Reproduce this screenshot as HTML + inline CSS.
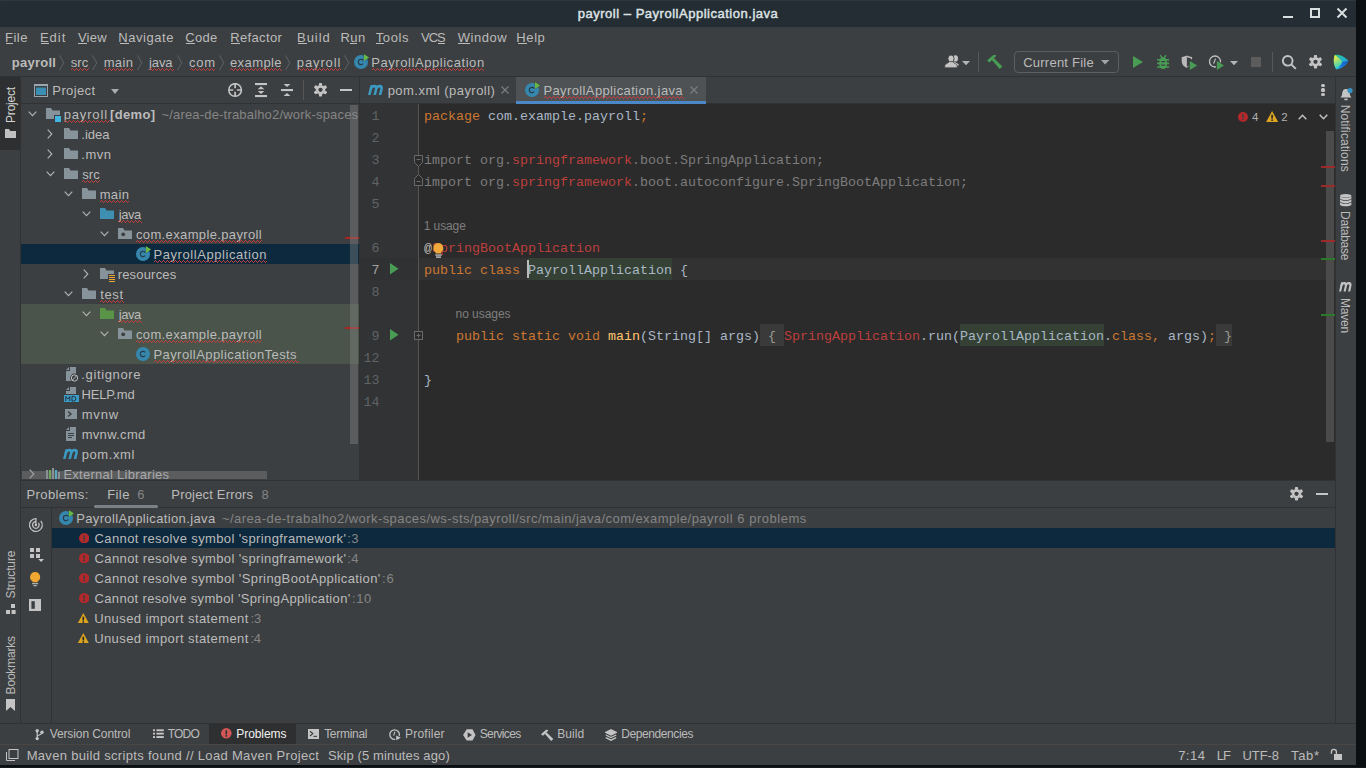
<!DOCTYPE html>
<html><head><meta charset="utf-8"><title>payroll – PayrollApplication.java</title><style>
html,body{margin:0;padding:0;background:#0b0f11;width:1366px;height:768px;overflow:hidden}
body{font-family:"Liberation Sans",sans-serif;font-size:13px;color:#bbbbbb;position:relative}
.t{position:absolute;white-space:pre;line-height:16px;height:16px}
.r{position:absolute}
.i{position:absolute;display:block}
.m{font-family:"Liberation Mono",monospace;font-size:13.33px}
</style></head><body>
<svg width="0" height="0" style="position:absolute"><defs><pattern id="wv" width="4" height="3" patternUnits="userSpaceOnUse"><rect x="0" y="1" width="1" height="1" fill="#c0403c"/><rect x="1" y="0" width="1" height="1" fill="#c0403c"/><rect x="2" y="1" width="1" height="1" fill="#c0403c"/><rect x="3" y="2" width="1" height="1" fill="#c0403c"/></pattern></defs></svg>
<div class="r" style="left:0px;top:0px;width:1356px;height:765px;background:#3c3f41;"></div>
<div class="r" style="left:0px;top:0px;width:1356px;height:27px;background:#232d33;border-radius:3px 3px 0 0;"></div>
<div class="r" style="left:2px;top:0px;width:1352px;height:1px;background:#2d393e;"></div>
<span class="t" style="left:577.76px;top:6.00px;font-size:13px;line-height:15px;height:15px;color:#dfe3e5;letter-spacing:0.515px;-webkit-text-stroke:0.45px #dfe3e5;">payroll – PayrollApplication.java</span>
<div class="r" style="left:1283px;top:16px;width:10px;height:2px;background:#d9dee0;"></div>
<div class="r" style="left:1310px;top:8px;width:6px;height:6px;border:2px solid #d9dee0"></div>
<svg class="i" style="left:1336px;top:7px;" width="12" height="12" viewBox="0 0 12 12"><path d="M1.5 1.5 L10.5 10.5 M10.5 1.5 L1.5 10.5" stroke="#d9dee0" stroke-width="2" fill="none"/></svg>
<span class="t" style="left:5.03px;top:30.00px;font-size:13px;line-height:15px;height:15px;color:#bbbbbb;letter-spacing:0.466px;">File</span>
<span class="t" style="left:39.93px;top:30.00px;font-size:13px;line-height:15px;height:15px;color:#bbbbbb;letter-spacing:0.987px;">Edit</span>
<span class="t" style="left:77.94px;top:30.00px;font-size:13px;line-height:15px;height:15px;color:#bbbbbb;letter-spacing:0.216px;">View</span>
<span class="t" style="left:118.23px;top:30.00px;font-size:13px;line-height:15px;height:15px;color:#bbbbbb;letter-spacing:0.548px;">Navigate</span>
<span class="t" style="left:185.34px;top:30.00px;font-size:13px;line-height:15px;height:15px;color:#bbbbbb;letter-spacing:0.253px;">Code</span>
<span class="t" style="left:230.13px;top:30.00px;font-size:13px;line-height:15px;height:15px;color:#bbbbbb;letter-spacing:0.379px;">Refactor</span>
<span class="t" style="left:297.03px;top:30.00px;font-size:13px;line-height:15px;height:15px;color:#bbbbbb;letter-spacing:0.974px;">Build</span>
<span class="t" style="left:340.43px;top:30.00px;font-size:13px;line-height:15px;height:15px;color:#bbbbbb;letter-spacing:0.481px;">Run</span>
<span class="t" style="left:375.71px;top:30.00px;font-size:13px;line-height:15px;height:15px;color:#bbbbbb;letter-spacing:0.643px;">Tools</span>
<span class="t" style="left:421.04px;top:30.00px;font-size:13px;line-height:15px;height:15px;color:#bbbbbb;letter-spacing:-0.988px;">VCS</span>
<span class="t" style="left:457.64px;top:30.00px;font-size:13px;line-height:15px;height:15px;color:#bbbbbb;letter-spacing:0.558px;">Window</span>
<span class="t" style="left:516.33px;top:30.00px;font-size:13px;line-height:15px;height:15px;color:#bbbbbb;letter-spacing:0.592px;">Help</span>
<div class="r" style="left:6px;top:43px;width:7px;height:1px;background:#bbbbbb;"></div>
<div class="r" style="left:41px;top:43px;width:8px;height:1px;background:#bbbbbb;"></div>
<div class="r" style="left:78px;top:43px;width:9px;height:1px;background:#bbbbbb;"></div>
<div class="r" style="left:119.5px;top:43px;width:9.0px;height:1px;background:#bbbbbb;"></div>
<div class="r" style="left:186px;top:43px;width:8.5px;height:1px;background:#bbbbbb;"></div>
<div class="r" style="left:231px;top:43px;width:8.5px;height:1px;background:#bbbbbb;"></div>
<div class="r" style="left:298px;top:43px;width:8.5px;height:1px;background:#bbbbbb;"></div>
<div class="r" style="left:350px;top:43px;width:7px;height:1px;background:#bbbbbb;"></div>
<div class="r" style="left:376px;top:43px;width:8px;height:1px;background:#bbbbbb;"></div>
<div class="r" style="left:438px;top:43px;width:7px;height:1px;background:#bbbbbb;"></div>
<div class="r" style="left:457.5px;top:43px;width:12.5px;height:1px;background:#bbbbbb;"></div>
<div class="r" style="left:517.5px;top:43px;width:9.0px;height:1px;background:#bbbbbb;"></div>
<span class="t" style="left:11.84px;top:55.00px;font-size:13px;line-height:15px;height:15px;color:#bbbbbb;font-weight:bold;letter-spacing:0.242px;">payroll</span>
<span class="t" style="left:70.64px;top:55.00px;font-size:13px;line-height:15px;height:15px;color:#bbbbbb;letter-spacing:0.188px;">src</span>
<svg class="i" style="left:71px;top:68px" width="18" height="3" shape-rendering="crispEdges"><rect width="18" height="3" fill="url(#wv)"/></svg>
<span class="t" style="left:103.64px;top:55.00px;font-size:13px;line-height:15px;height:15px;color:#bbbbbb;letter-spacing:0.410px;">main</span>
<svg class="i" style="left:104px;top:68px" width="29" height="3" shape-rendering="crispEdges"><rect width="29" height="3" fill="url(#wv)"/></svg>
<span class="t" style="left:148.92px;top:55.00px;font-size:13px;line-height:15px;height:15px;color:#bbbbbb;letter-spacing:-0.055px;">java</span>
<svg class="i" style="left:149px;top:68px" width="25" height="3" shape-rendering="crispEdges"><rect width="25" height="3" fill="url(#wv)"/></svg>
<span class="t" style="left:189.05px;top:55.00px;font-size:13px;line-height:15px;height:15px;color:#bbbbbb;letter-spacing:0.725px;">com</span>
<svg class="i" style="left:190px;top:68px" width="25" height="3" shape-rendering="crispEdges"><rect width="25" height="3" fill="url(#wv)"/></svg>
<span class="t" style="left:229.95px;top:55.00px;font-size:13px;line-height:15px;height:15px;color:#bbbbbb;letter-spacing:0.415px;">example</span>
<svg class="i" style="left:230px;top:68px" width="52" height="3" shape-rendering="crispEdges"><rect width="52" height="3" fill="url(#wv)"/></svg>
<span class="t" style="left:296.86px;top:55.00px;font-size:13px;line-height:15px;height:15px;color:#bbbbbb;letter-spacing:0.869px;">payroll</span>
<svg class="i" style="left:298px;top:68px" width="43" height="3" shape-rendering="crispEdges"><rect width="43" height="3" fill="url(#wv)"/></svg>
<span class="t" style="left:371.23px;top:55.00px;font-size:13px;line-height:15px;height:15px;color:#bbbbbb;letter-spacing:0.563px;">PayrollApplication</span>
<svg class="i" style="left:372px;top:68px" width="112" height="3" shape-rendering="crispEdges"><rect width="112" height="3" fill="url(#wv)"/></svg>
<svg class="i" style="left:59.3px;top:54.5px;" width="6" height="16" viewBox="0 0 6 16"><path d="M0.5 0.5 L4.8 7.8 L0.5 15.1" stroke="#606465" stroke-width="1" fill="none"/></svg>
<svg class="i" style="left:92.2px;top:54.5px;" width="6" height="16" viewBox="0 0 6 16"><path d="M0.5 0.5 L4.8 7.8 L0.5 15.1" stroke="#606465" stroke-width="1" fill="none"/></svg>
<svg class="i" style="left:137px;top:54.5px;" width="6" height="16" viewBox="0 0 6 16"><path d="M0.5 0.5 L4.8 7.8 L0.5 15.1" stroke="#606465" stroke-width="1" fill="none"/></svg>
<svg class="i" style="left:177.3px;top:54.5px;" width="6" height="16" viewBox="0 0 6 16"><path d="M0.5 0.5 L4.8 7.8 L0.5 15.1" stroke="#606465" stroke-width="1" fill="none"/></svg>
<svg class="i" style="left:219px;top:54.5px;" width="6" height="16" viewBox="0 0 6 16"><path d="M0.5 0.5 L4.8 7.8 L0.5 15.1" stroke="#606465" stroke-width="1" fill="none"/></svg>
<svg class="i" style="left:285.3px;top:54.5px;" width="6" height="16" viewBox="0 0 6 16"><path d="M0.5 0.5 L4.8 7.8 L0.5 15.1" stroke="#606465" stroke-width="1" fill="none"/></svg>
<svg class="i" style="left:343.8px;top:54.5px;" width="6" height="16" viewBox="0 0 6 16"><path d="M0.5 0.5 L4.8 7.8 L0.5 15.1" stroke="#606465" stroke-width="1" fill="none"/></svg>
<svg class="i" style="left:354px;top:54px;overflow:visible;" width="16" height="16" viewBox="0 -1 16 16"><circle cx="7" cy="7" r="7" fill="#3587ae"/><path d="M9.1 5.3 A2.7 2.7 0 1 0 9.1 8.7" stroke="#2a3a46" stroke-width="1.15" fill="none"/><path d="M9.9 -1 L15.1 2.5 L9.9 5.9 Z" fill="#68b843" stroke="rgba(20,35,50,0.55)" stroke-width="0.7" paint-order="stroke"/></svg>
<div class="r" style="left:0px;top:76px;width:1356px;height:1px;background:#323232;"></div>
<svg class="i" style="left:944px;top:55px;" width="16" height="13" viewBox="0 0 16 13"><g fill="#c4c4c4"><ellipse cx="11.4" cy="3.4" rx="2.6" ry="3.2"/><path d="M9 6.5 C12 7.6 15 8.6 15 10.4 H11 Z"/><ellipse cx="7" cy="3.6" rx="3.1" ry="3.6" stroke="#3c3f41" stroke-width="0.9"/><path d="M0.8 12.8 V10.6 C0.8 8.8 4.4 8.4 5.4 6.6 H8.6 C9.6 8.4 13.2 8.8 13.2 10.6 V12.8 Z" stroke="#3c3f41" stroke-width="0.7"/></g></svg>
<svg class="i" style="left:962px;top:61px;" width="8" height="4.3" viewBox="0 0 8 4.3"><path d="M0 0 H8 L4.0 4.3 Z" fill="#b4b4b4"/></svg>
<div class="r" style="left:978px;top:52px;width:1px;height:20px;background:#585858;"></div>
<svg class="i" style="left:987px;top:54px;" width="16" height="16" viewBox="0 0 16 16"><g fill="#499c54"><path d="M0 6.5 L6.3 0.9 L9.2 1.1 L8.6 2.5 L2.5 8.4 Z"/><path d="M4.7 5.8 L6.8 4.1 L15.4 12.4 L12.7 15.1 Z"/></g></svg>
<div class="r" style="left:1014px;top:51px;width:103px;height:20px;border:1px solid #5c5f60;border-radius:4px"></div>
<span class="t" style="left:1023.24px;top:55.00px;font-size:13px;line-height:15px;height:15px;color:#bbbbbb;letter-spacing:0.230px;">Current File</span>
<svg class="i" style="left:1100.8px;top:60px;" width="8.2" height="4.6" viewBox="0 0 8.2 4.6"><path d="M0 0 H8.2 L4.1 4.6 Z" fill="#a2a5a7"/></svg>
<svg class="i" style="left:1133px;top:56px;" width="10.0" height="12.0" viewBox="0 0 10 12"><path d="M0 0 L10 6 L0 12 Z" fill="#499c54"/></svg>
<svg class="i" style="left:1156px;top:55px;overflow:visible;" width="14" height="14" viewBox="0 0 14 14"><g fill="#499c54" stroke="#499c54"><path d="M7.1 2.3 C10 2.3 10.9 4.8 10.9 8.4 C10.9 12 9.4 14 7.1 14 C4.8 14 3.3 12 3.3 8.4 C3.3 4.8 4.2 2.3 7.1 2.3 Z" stroke="none"/><path d="M4.2 0.2 L6.2 3 M10 0.2 L8 3" stroke-width="1.3" fill="none"/><path d="M1.1 4.8 H13.1 M1.1 8.4 H13.1 M1.1 12 H13.1" stroke-width="1.6" fill="none"/></g><path d="M5.3 6.6 H8.9 M5.3 10.2 H8.9" stroke="#3c3f41" stroke-width="1.2"/></svg>
<svg class="i" style="left:1181px;top:55px;overflow:visible;" width="18" height="17" viewBox="0 0 18 17"><path d="M5.9 0.5 C4.6 1.2 3 1.6 0.7 2 V6 C0.7 9.6 3.2 11.8 5.9 12.9 Z" fill="#b9b9b9"/><path d="M5.9 0.5 C7.2 1.2 8.8 1.6 11.1 2 V4.2 H9.8 V3.2 C8.4 3 7 2.6 5.9 2.2 Z" fill="#b9b9b9"/><path d="M5.9 12.9 C6.6 12.6 7.3 12.2 7.9 11.8 L7.9 10.4 C7.3 10.8 6.6 11.1 5.9 11.4 Z" fill="#8a8a8a"/><path d="M7.8 4.6 L17.4 10.5 L7.8 16.4 Z" fill="#3c3f41"/><path d="M8.8 6.1 L16.2 10.5 L8.8 14.9 Z" fill="#499c54"/></svg>
<svg class="i" style="left:1208px;top:55px;overflow:visible;" width="18" height="17" viewBox="0 0 18 17"><circle cx="7" cy="6.5" r="5.5" fill="none" stroke="#c4c4c4" stroke-width="1.3"/><path d="M7.6 3.6 L5.6 8.6" fill="none" stroke="#c4c4c4" stroke-width="1.2"/><path d="M7.9 4.6 L17.4 10.5 L7.9 16.4 Z" fill="#3c3f41"/><path d="M8.9 6.1 L16 10.5 L8.9 14.9 Z" fill="#499c54"/></svg>
<svg class="i" style="left:1230px;top:61px;" width="8" height="4.3" viewBox="0 0 8 4.3"><path d="M0 0 H8 L4.0 4.3 Z" fill="#b4b4b4"/></svg>
<div class="r" style="left:1251px;top:57px;width:10px;height:10px;background:#5c5c5c;"></div>
<div class="r" style="left:1272px;top:52px;width:1px;height:20px;background:#585858;"></div>
<svg class="i" style="left:1281px;top:54px;" width="16" height="16" viewBox="0 0 16 16"><circle cx="6.7" cy="6.8" r="4.85" fill="none" stroke="#c4c4c4" stroke-width="1.9"/><path d="M10.3 10.4 L14.8 14.9" stroke="#c4c4c4" stroke-width="2"/></svg>
<svg class="i" style="left:1308.5px;top:55.2px;" width="13" height="13.599999999999998" viewBox="0 0 13 13.6"><g transform="translate(6.5,6.8)" fill="#c4c4c4"><circle r="4.6"/><path d="M-1.9 -4.1 L-1.25 -6.8 H1.25 L1.9 -4.1 Z" transform="rotate(0)"/><path d="M-1.9 -4.1 L-1.25 -6.8 H1.25 L1.9 -4.1 Z" transform="rotate(60)"/><path d="M-1.9 -4.1 L-1.25 -6.8 H1.25 L1.9 -4.1 Z" transform="rotate(120)"/><path d="M-1.9 -4.1 L-1.25 -6.8 H1.25 L1.9 -4.1 Z" transform="rotate(180)"/><path d="M-1.9 -4.1 L-1.25 -6.8 H1.25 L1.9 -4.1 Z" transform="rotate(240)"/><path d="M-1.9 -4.1 L-1.25 -6.8 H1.25 L1.9 -4.1 Z" transform="rotate(300)"/></g><circle cx="6.5" cy="6.8" r="2.15" fill="#3c3f41"/></svg>
<svg class="i" style="left:1333px;top:54px;" width="16" height="16" viewBox="0 0 16 16"><defs><linearGradient id="cgA" x1="0.2" y1="0" x2="0.5" y2="1"><stop offset="0" stop-color="#fff234"/><stop offset="0.35" stop-color="#b5e06a"/><stop offset="0.7" stop-color="#5fd7a0"/><stop offset="1" stop-color="#1fc3e8"/></linearGradient><linearGradient id="cgB" x1="0" y1="0" x2="1" y2="1"><stop offset="0" stop-color="#38c88a"/><stop offset="0.5" stop-color="#1fb2c8"/><stop offset="1" stop-color="#1a8be0"/></linearGradient><linearGradient id="cgC" x1="1" y1="0" x2="0" y2="1"><stop offset="0" stop-color="#1a56c4"/><stop offset="0.6" stop-color="#1877d6"/><stop offset="1" stop-color="#14b8f0"/></linearGradient></defs><path d="M1.8 1 C6.5 0.2 12.5 3 15.2 7 C13.2 11.6 7.6 15.2 3.2 15.2 C0.4 11 0.2 5.4 1.8 1 Z" fill="url(#cgB)"/><path d="M9 8 L15.2 7 C13.2 11.6 7.6 15.2 3.2 15.2 Z" fill="url(#cgC)"/><path d="M1.8 1 C5 3 8 6 9.2 8 C8.4 10.6 5.6 13.6 3.2 15.2 C0.4 11 0.2 5.4 1.8 1 Z" fill="url(#cgA)"/></svg>
<div class="r" style="left:0px;top:77px;width:20px;height:73px;background:#2d2f30;"></div>
<div class="r" style="left:20px;top:77px;width:1px;height:647px;background:#323232;"></div>
<span class="t" style="left:0;top:0;font-size:12px;line-height:14px;height:14px;color:#d4d4d4;letter-spacing:-0.196px;transform-origin:0 0;transform:translate(3.60px,122.98px) rotate(-90deg);">Project</span>
<svg class="i" style="left:5px;top:129px;" width="11" height="9" viewBox="0 0 11 9"><path d="M0 0 H4 L5.2 2 H11 V9 H0 Z" fill="#c0c0c0"/></svg>
<span class="t" style="left:0;top:0;font-size:12px;line-height:14px;height:14px;color:#bbbbbb;letter-spacing:-0.088px;transform-origin:0 0;transform:translate(3.70px,598.44px) rotate(-90deg);">Structure</span>
<svg class="i" style="left:5.5px;top:604px;" width="10" height="10" viewBox="0 0 10 10"><rect x="5" y="0" width="4" height="4" fill="#c4c4c4"/><rect x="0" y="6" width="4" height="4" fill="#c4c4c4"/><rect x="5.6" y="6" width="4" height="4" fill="#c4c4c4"/></svg>
<span class="t" style="left:0;top:0;font-size:12px;line-height:14px;height:14px;color:#bbbbbb;letter-spacing:-0.200px;transform-origin:0 0;transform:translate(3.70px,694.38px) rotate(-90deg);">Bookmarks</span>
<svg class="i" style="left:6px;top:699px;" width="9" height="12" viewBox="0 0 9 12"><path d="M0 0 H9 V12 L4.5 8 L0 12 Z" fill="#c4c4c4"/></svg>
<svg class="i" style="left:34px;top:84px;" width="14" height="13" viewBox="0 0 14 13"><rect x="0.5" y="0.5" width="13" height="12" fill="none" stroke="#9aa7b0" stroke-width="1"/><rect x="0" y="0" width="14" height="2" fill="#9aa7b0"/><rect x="2" y="3.5" width="10" height="7.5" fill="#3a8fb2"/></svg>
<span class="t" style="left:52.33px;top:83.00px;font-size:13px;line-height:15px;height:15px;color:#bbbbbb;letter-spacing:0.384px;">Project</span>
<svg class="i" style="left:111px;top:89px;" width="8" height="5" viewBox="0 0 8 5"><path d="M0 0 H8 L4.0 5 Z" fill="#a8aaab"/></svg>
<svg class="i" style="left:228px;top:83px;" width="15" height="15" viewBox="0 0 15 15"><circle cx="7.1" cy="7" r="6.3" fill="none" stroke="#c4c4c4" stroke-width="1.6"/><path d="M7.1 1 V5.2 M7.1 8.8 V13 M1 7 H5.3 M8.9 7 H13.2" stroke="#c4c4c4" stroke-width="1.7"/></svg>
<svg class="i" style="left:255px;top:83px;" width="12" height="15" viewBox="0 0 12 15"><rect x="0" y="0" width="12" height="2.1" fill="#c4c4c4"/><rect x="0" y="12" width="12" height="2.1" fill="#c4c4c4"/><path d="M6 3.3 L9.3 6.2 H2.7 Z M6 10.9 L9.3 8 H2.7 Z" fill="#c4c4c4"/></svg>
<svg class="i" style="left:281px;top:83px;" width="12" height="15" viewBox="0 0 12 15"><rect x="0" y="6" width="12" height="2.1" fill="#c4c4c4"/><path d="M6 4.1 L9.4 1.1 H2.6 Z M6 10 L9.4 13 H2.6 Z" fill="#c4c4c4"/></svg>
<div class="r" style="left:303px;top:80px;width:1px;height:20px;background:#585653;"></div>
<svg class="i" style="left:313.5px;top:83.25px;" width="13" height="13.599999999999998" viewBox="0 0 13 13.6"><g transform="translate(6.5,6.8)" fill="#c4c4c4"><circle r="4.6"/><path d="M-1.9 -4.1 L-1.25 -6.8 H1.25 L1.9 -4.1 Z" transform="rotate(0)"/><path d="M-1.9 -4.1 L-1.25 -6.8 H1.25 L1.9 -4.1 Z" transform="rotate(60)"/><path d="M-1.9 -4.1 L-1.25 -6.8 H1.25 L1.9 -4.1 Z" transform="rotate(120)"/><path d="M-1.9 -4.1 L-1.25 -6.8 H1.25 L1.9 -4.1 Z" transform="rotate(180)"/><path d="M-1.9 -4.1 L-1.25 -6.8 H1.25 L1.9 -4.1 Z" transform="rotate(240)"/><path d="M-1.9 -4.1 L-1.25 -6.8 H1.25 L1.9 -4.1 Z" transform="rotate(300)"/></g><circle cx="6.5" cy="6.8" r="2.15" fill="#3c3f41"/></svg>
<div class="r" style="left:340px;top:89px;width:12px;height:2px;background:#c4c4c4;"></div>
<div class="r" style="left:21px;top:103px;width:338px;height:1px;background:#323232;"></div>
<div class="r" style="left:359px;top:77px;width:1px;height:404px;background:#323232;"></div>
<div class="r" style="left:21px;top:104px;width:338px;height:376px;overflow:hidden">
<svg class="i" style="left:7px;top:6.6px;" width="9" height="6" viewBox="0 0 9 6"><path d="M0.7 0.7 L4.5 4.6 L8.3 0.7" stroke="#b2b2b2" stroke-width="1.15" fill="none"/></svg>
<svg class="i" style="left:25px;top:4px;" width="16" height="14" viewBox="0 0 16 14"><path d="M0 0 H5 L6.5 2.5 H14 V7 H8 V11 H0 Z" fill="#87939a"/><rect x="9" y="8" width="6" height="6" fill="#40b6e0"/></svg>
<span class="t" style="left:42.66px;top:3.00px;font-size:13px;line-height:15px;height:15px;color:#bbbbbb;letter-spacing:0.852px;">payroll</span>
<svg class="i" style="left:43px;top:16px" width="46" height="3" shape-rendering="crispEdges"><rect width="46" height="3" fill="url(#wv)"/></svg>
<span class="t" style="left:89.07px;top:3.00px;font-size:13px;line-height:15px;height:15px;color:#bbbbbb;font-weight:bold;letter-spacing:0.346px;">[demo]</span>
<span class="t" style="left:140.42px;top:3.00px;font-size:13px;line-height:15px;height:15px;color:#858585;letter-spacing:0.184px;">~/area-de-trabalho2/work-spaces</span>
<svg class="i" style="left:26px;top:24.5px;" width="6" height="10" viewBox="0 0 6 10"><path d="M0.7 0.7 L4.8 5 L0.7 9.3" stroke="#b2b2b2" stroke-width="1.15" fill="none"/></svg>
<svg class="i" style="left:43px;top:24px;left:43px;" width="14" height="11" viewBox="0 0 14 11"><path d="M0 0 H5 L6.5 2.5 H14 V11 H0 Z" fill="#87939a"/></svg>
<span class="t" style="left:60.31px;top:23.00px;font-size:13px;line-height:15px;height:15px;color:#bbbbbb;letter-spacing:-0.026px;">.idea</span>
<svg class="i" style="left:26px;top:44.5px;" width="6" height="10" viewBox="0 0 6 10"><path d="M0.7 0.7 L4.8 5 L0.7 9.3" stroke="#b2b2b2" stroke-width="1.15" fill="none"/></svg>
<svg class="i" style="left:43px;top:44px;left:43px;" width="14" height="11" viewBox="0 0 14 11"><path d="M0 0 H5 L6.5 2.5 H14 V11 H0 Z" fill="#87939a"/></svg>
<span class="t" style="left:60.31px;top:43.00px;font-size:13px;line-height:15px;height:15px;color:#bbbbbb;letter-spacing:0.487px;">.mvn</span>
<svg class="i" style="left:25px;top:66.6px;" width="9" height="6" viewBox="0 0 9 6"><path d="M0.7 0.7 L4.5 4.6 L8.3 0.7" stroke="#b2b2b2" stroke-width="1.15" fill="none"/></svg>
<svg class="i" style="left:43px;top:64px;left:43px;" width="14" height="11" viewBox="0 0 14 11"><path d="M0 0 H5 L6.5 2.5 H14 V11 H0 Z" fill="#87939a"/></svg>
<span class="t" style="left:61.14px;top:63.00px;font-size:13px;line-height:15px;height:15px;color:#bbbbbb;letter-spacing:0.138px;">src</span>
<svg class="i" style="left:61px;top:76px" width="18" height="3" shape-rendering="crispEdges"><rect width="18" height="3" fill="url(#wv)"/></svg>
<svg class="i" style="left:43px;top:86.6px;" width="9" height="6" viewBox="0 0 9 6"><path d="M0.7 0.7 L4.5 4.6 L8.3 0.7" stroke="#b2b2b2" stroke-width="1.15" fill="none"/></svg>
<svg class="i" style="left:61px;top:84px;left:61px;" width="14" height="11" viewBox="0 0 14 11"><path d="M0 0 H5 L6.5 2.5 H14 V11 H0 Z" fill="#87939a"/></svg>
<span class="t" style="left:78.64px;top:83.00px;font-size:13px;line-height:15px;height:15px;color:#bbbbbb;letter-spacing:0.410px;">main</span>
<svg class="i" style="left:79px;top:96px" width="29" height="3" shape-rendering="crispEdges"><rect width="29" height="3" fill="url(#wv)"/></svg>
<svg class="i" style="left:61px;top:106.6px;" width="9" height="6" viewBox="0 0 9 6"><path d="M0.7 0.7 L4.5 4.6 L8.3 0.7" stroke="#b2b2b2" stroke-width="1.15" fill="none"/></svg>
<svg class="i" style="left:79px;top:104px;" width="14" height="11" viewBox="0 0 14 11"><path d="M0 0 H5 L6.5 2.5 H14 V11 H0 Z" fill="#3e8fb2"/></svg>
<span class="t" style="left:97.82px;top:103.00px;font-size:13px;line-height:15px;height:15px;color:#bbbbbb;letter-spacing:-0.455px;">java</span>
<svg class="i" style="left:97px;top:116px" width="24" height="3" shape-rendering="crispEdges"><rect width="24" height="3" fill="url(#wv)"/></svg>
<svg class="i" style="left:79px;top:126.6px;" width="9" height="6" viewBox="0 0 9 6"><path d="M0.7 0.7 L4.5 4.6 L8.3 0.7" stroke="#b2b2b2" stroke-width="1.15" fill="none"/></svg>
<svg class="i" style="left:97px;top:124px;" width="14" height="11" viewBox="0 0 14 11"><path d="M0 0 H5 L6.5 2.5 H14 V11 H0 Z" fill="#87939a"/><circle cx="5.2" cy="6.3" r="1.9" fill="#3c3f41"/></svg>
<span class="t" style="left:114.95px;top:123.00px;font-size:13px;line-height:15px;height:15px;color:#bbbbbb;letter-spacing:0.367px;">com.example.payroll</span>
<svg class="i" style="left:115px;top:136px" width="126" height="3" shape-rendering="crispEdges"><rect width="126" height="3" fill="url(#wv)"/></svg>
<div class="r" style="left:0px;top:140px;width:338px;height:20px;background:#0d293e;"></div>
<svg class="i" style="left:115px;top:142px;overflow:visible;" width="16" height="16" viewBox="0 -1 16 16"><circle cx="7" cy="7" r="7" fill="#3587ae"/><path d="M9.1 5.3 A2.7 2.7 0 1 0 9.1 8.7" stroke="#2a3a46" stroke-width="1.15" fill="none"/><path d="M9.9 -1 L15.1 2.5 L9.9 5.9 Z" fill="#68b843" stroke="rgba(20,35,50,0.55)" stroke-width="0.7" paint-order="stroke"/></svg>
<span class="t" style="left:132.43px;top:143.00px;font-size:13px;line-height:15px;height:15px;color:#bbbbbb;letter-spacing:0.569px;">PayrollApplication</span>
<svg class="i" style="left:133px;top:156px" width="113" height="3" shape-rendering="crispEdges"><rect width="113" height="3" fill="url(#wv)"/></svg>
<svg class="i" style="left:62px;top:164.5px;" width="6" height="10" viewBox="0 0 6 10"><path d="M0.7 0.7 L4.8 5 L0.7 9.3" stroke="#b2b2b2" stroke-width="1.15" fill="none"/></svg>
<svg class="i" style="left:79px;top:164px;" width="16" height="14" viewBox="0 0 16 14"><path d="M0 0 H5 L6.5 2.5 H14 V6 H8 V11 H0 Z" fill="#87939a"/><rect x="9" y="7" width="6" height="1" fill="#e9a43c"/><rect x="9" y="9" width="6" height="1" fill="#e9a43c"/><rect x="9" y="11" width="6" height="1" fill="#e9a43c"/><rect x="9" y="13" width="6" height="1" fill="#e9a43c"/></svg>
<span class="t" style="left:96.64px;top:163.00px;font-size:13px;line-height:15px;height:15px;color:#bbbbbb;letter-spacing:0.194px;">resources</span>
<svg class="i" style="left:43px;top:186.6px;" width="9" height="6" viewBox="0 0 9 6"><path d="M0.7 0.7 L4.5 4.6 L8.3 0.7" stroke="#b2b2b2" stroke-width="1.15" fill="none"/></svg>
<svg class="i" style="left:61px;top:184px;left:61px;" width="14" height="11" viewBox="0 0 14 11"><path d="M0 0 H5 L6.5 2.5 H14 V11 H0 Z" fill="#87939a"/></svg>
<span class="t" style="left:79.30px;top:183.00px;font-size:13px;line-height:15px;height:15px;color:#bbbbbb;letter-spacing:0.613px;">test</span>
<svg class="i" style="left:79px;top:196px" width="24" height="3" shape-rendering="crispEdges"><rect width="24" height="3" fill="url(#wv)"/></svg>
<div class="r" style="left:0px;top:200px;width:338px;height:20px;background:#4a544a;"></div>
<svg class="i" style="left:61px;top:206.6px;" width="9" height="6" viewBox="0 0 9 6"><path d="M0.7 0.7 L4.5 4.6 L8.3 0.7" stroke="#b2b2b2" stroke-width="1.15" fill="none"/></svg>
<svg class="i" style="left:79px;top:204px;" width="14" height="11" viewBox="0 0 14 11"><path d="M0 0 H5 L6.5 2.5 H14 V11 H0 Z" fill="#5a9447"/></svg>
<span class="t" style="left:97.82px;top:203.00px;font-size:13px;line-height:15px;height:15px;color:#bbbbbb;letter-spacing:-0.455px;">java</span>
<svg class="i" style="left:97px;top:216px" width="24" height="3" shape-rendering="crispEdges"><rect width="24" height="3" fill="url(#wv)"/></svg>
<div class="r" style="left:0px;top:220px;width:338px;height:20px;background:#4a544a;"></div>
<svg class="i" style="left:79px;top:226.6px;" width="9" height="6" viewBox="0 0 9 6"><path d="M0.7 0.7 L4.5 4.6 L8.3 0.7" stroke="#b2b2b2" stroke-width="1.15" fill="none"/></svg>
<svg class="i" style="left:97px;top:224px;" width="14" height="11" viewBox="0 0 14 11"><path d="M0 0 H5 L6.5 2.5 H14 V11 H0 Z" fill="#87939a"/><circle cx="5.2" cy="6.3" r="1.9" fill="#3c3f41"/></svg>
<span class="t" style="left:114.95px;top:223.00px;font-size:13px;line-height:15px;height:15px;color:#bbbbbb;letter-spacing:0.367px;">com.example.payroll</span>
<svg class="i" style="left:115px;top:236px" width="126" height="3" shape-rendering="crispEdges"><rect width="126" height="3" fill="url(#wv)"/></svg>
<div class="r" style="left:0px;top:240px;width:338px;height:20px;background:#4a544a;"></div>
<svg class="i" style="left:115px;top:242px;overflow:visible;" width="16" height="16" viewBox="0 -1 16 16"><circle cx="7" cy="7" r="7" fill="#3587ae"/><path d="M9.1 5.3 A2.7 2.7 0 1 0 9.1 8.7" stroke="#2a3a46" stroke-width="1.15" fill="none"/></svg>
<span class="t" style="left:132.43px;top:243.00px;font-size:13px;line-height:15px;height:15px;color:#bbbbbb;letter-spacing:0.433px;">PayrollApplicationTests</span>
<svg class="i" style="left:133px;top:256px" width="145" height="3" shape-rendering="crispEdges"><rect width="145" height="3" fill="url(#wv)"/></svg>
<svg class="i" style="left:45px;top:263px;overflow:visible;" width="14" height="16" viewBox="0 0 14 16"><path d="M4 0 H10 V14 H0 V4 H4 Z" fill="#87939a"/><path d="M0 3 L3 0 V3 Z" fill="#87939a"/><circle cx="8.5" cy="11" r="4.4" fill="#3c3f41"/><circle cx="8.5" cy="11" r="3.15" fill="none" stroke="#c4c4c4" stroke-width="0.95"/><path d="M6.3 13.2 L10.7 8.8" stroke="#c4c4c4" stroke-width="0.95"/></svg>
<span class="t" style="left:60.31px;top:263.00px;font-size:13px;line-height:15px;height:15px;color:#bbbbbb;letter-spacing:0.632px;">.gitignore</span>
<svg class="i" style="left:43px;top:283px;" width="15" height="15" viewBox="0 0 15 15"><path d="M6 0 H12 V7 H2 V4 H6 Z" fill="#87939a"/><path d="M2 3 L5 0 V3 Z" fill="#87939a"/><rect x="0" y="8" width="15" height="7" fill="#3a9bc8"/><path d="M1.8 14 V9.5 L3.8 12 L5.8 9.5 V14 M8 9.5 V14 H9.6 A2.2 2.25 0 0 0 9.6 9.5 Z" stroke="#26343c" stroke-width="1" fill="none"/></svg>
<span class="t" style="left:60.43px;top:283.00px;font-size:13px;line-height:15px;height:15px;color:#bbbbbb;letter-spacing:-0.121px;">HELP.md</span>
<svg class="i" style="left:44px;top:305px;" width="12" height="10" viewBox="0 0 12 10"><rect x="0" y="0" width="12" height="10" fill="#87939a"/><path d="M3 2.5 L6 5 L3 7.5" stroke="#3c3f41" stroke-width="1.4" fill="none"/></svg>
<span class="t" style="left:60.64px;top:303.00px;font-size:13px;line-height:15px;height:15px;color:#bbbbbb;letter-spacing:0.861px;">mvnw</span>
<svg class="i" style="left:45px;top:323px;" width="10" height="14" viewBox="0 0 10 14"><path d="M4 0 H10 V14 H0 V4 H4 Z" fill="#87939a"/><path d="M0 3 L3 0 V3 Z" fill="#87939a"/><rect x="2" y="6" width="6" height="1" fill="#3c3f41"/><rect x="2" y="8" width="6" height="1" fill="#3c3f41"/><rect x="2" y="10" width="4" height="1" fill="#3c3f41"/></svg>
<span class="t" style="left:60.64px;top:323.00px;font-size:13px;line-height:15px;height:15px;color:#bbbbbb;letter-spacing:0.326px;">mvnw.cmd</span>
<svg class="i" style="left:42.3px;top:344.6px;overflow:visible" width="15.8" height="10.1"><g transform="translate(0.161,-0.999) scale(1.0712,1.1099)"><g transform="skewX(-14)" fill="none" stroke="#3b99c2" stroke-width="2.45" stroke-linecap="butt"><path d="M3.6 10 V1.1"/><path d="M3.6 4.8 C3.6 1.2 8.6 1.0 8.6 4.4 V10"/><path d="M8.6 4.8 C8.6 1.2 13.6 1.0 13.6 4.4 V10"/></g></g></svg>
<span class="t" style="left:60.66px;top:343.00px;font-size:13px;line-height:15px;height:15px;color:#bbbbbb;letter-spacing:0.598px;">pom.xml</span>
<svg class="i" style="left:8px;top:364.5px;" width="6" height="10" viewBox="0 0 6 10"><path d="M0.7 0.7 L4.8 5 L0.7 9.3" stroke="#b2b2b2" stroke-width="1.15" fill="none"/></svg>
<svg class="i" style="left:25px;top:363.5px;" width="14" height="11" viewBox="0 0 14 11"><rect x="0" y="2" width="2" height="9" fill="#87939a"/><rect x="3" y="2" width="2" height="9" fill="#62b543"/><rect x="6" y="0" width="2" height="11" fill="#87939a"/><rect x="9" y="2" width="2" height="9" fill="#40b6e0"/><rect x="12" y="4" width="2" height="7" fill="#87939a"/></svg>
<span class="t" style="left:42.43px;top:363.00px;font-size:13px;line-height:15px;height:15px;color:#bbbbbb;letter-spacing:0.264px;">External Libraries</span>
<div class="r" style="left:324px;top:133px;width:14px;height:2px;background:#ac2424;"></div>
<div class="r" style="left:324px;top:223px;width:14px;height:2px;background:#ac2424;"></div>
<div class="r" style="left:329px;top:1px;width:8px;height:339px;background:rgba(140,140,140,0.38);"></div>
<div class="r" style="left:1px;top:367px;width:245px;height:8px;background:rgba(140,140,140,0.38);"></div>
</div>
<div class="r" style="left:21px;top:480px;width:1315px;height:1px;background:#323232;"></div>
<div class="r" style="left:516px;top:77px;width:190px;height:26px;background:#4e5254;"></div>
<div class="r" style="left:360px;top:103px;width:976px;height:1px;background:#323232;"></div>
<div class="r" style="left:516px;top:101px;width:190px;height:3px;background:#4a88c7;"></div>
<svg class="i" style="left:368.1px;top:84.8px;overflow:visible" width="15.8" height="10.1"><g transform="translate(0.161,-0.999) scale(1.0712,1.1099)"><g transform="skewX(-14)" fill="none" stroke="#3b99c2" stroke-width="2.45" stroke-linecap="butt"><path d="M3.6 10 V1.1"/><path d="M3.6 4.8 C3.6 1.2 8.6 1.0 8.6 4.4 V10"/><path d="M8.6 4.8 C8.6 1.2 13.6 1.0 13.6 4.4 V10"/></g></g></svg>
<span class="t" style="left:387.66px;top:83.00px;font-size:13px;line-height:15px;height:15px;color:#bbbbbb;letter-spacing:0.473px;">pom.xml (payroll)</span>
<svg class="i" style="left:501px;top:86px;" width="8" height="8" viewBox="0 0 8 8"><path d="M0.5 0.5 L7.5 7.5 M7.5 0.5 L0.5 7.5" stroke="#7d7f80" stroke-width="1.1" fill="none"/></svg>
<svg class="i" style="left:525px;top:82px;overflow:visible;" width="16" height="16" viewBox="0 -1 16 16"><circle cx="7" cy="7" r="7" fill="#3587ae"/><path d="M9.1 5.3 A2.7 2.7 0 1 0 9.1 8.7" stroke="#2a3a46" stroke-width="1.15" fill="none"/><path d="M9.9 -1 L15.1 2.5 L9.9 5.9 Z" fill="#68b843" stroke="rgba(20,35,50,0.55)" stroke-width="0.7" paint-order="stroke"/></svg>
<span class="t" style="left:543.43px;top:83.00px;font-size:13px;line-height:15px;height:15px;color:#bbbbbb;letter-spacing:0.381px;">PayrollApplication.java</span>
<svg class="i" style="left:544px;top:96px" width="140" height="3" shape-rendering="crispEdges"><rect width="140" height="3" fill="url(#wv)"/></svg>
<svg class="i" style="left:690px;top:86px;" width="8" height="8" viewBox="0 0 8 8"><path d="M0.5 0.5 L7.5 7.5 M7.5 0.5 L0.5 7.5" stroke="#7d7f80" stroke-width="1.1" fill="none"/></svg>
<div class="r" style="left:1321.4px;top:84px;width:3.2px;height:3.2px;background:#c4c4c4;border-radius:1.5px;"></div>
<div class="r" style="left:1321.4px;top:88.4px;width:3.2px;height:3.2px;background:#c4c4c4;border-radius:1.5px;"></div>
<div class="r" style="left:1321.4px;top:92.8px;width:3.2px;height:3.2px;background:#c4c4c4;border-radius:1.5px;"></div>
<div class="r" style="left:360px;top:104px;width:58px;height:376px;background:#313335;"></div>
<div class="r" style="left:418px;top:104px;width:1px;height:376px;background:#555555;"></div>
<div class="r" style="left:419px;top:104px;width:916px;height:376px;background:#2b2b2b;"></div>
<div class="r" style="left:360px;top:258px;width:58px;height:22px;background:#2f3133;"></div>
<div class="r" style="left:419px;top:258px;width:916px;height:22px;background:#323232;"></div>
<div class="r" style="left:1335px;top:77px;width:1px;height:647px;background:#323232;"></div>
<div class="r" style="left:528px;top:258px;width:144px;height:22px;background:#344134;"></div>
<div class="r" style="left:960px;top:324px;width:144px;height:22px;background:#344134;"></div>
<div class="r" style="left:760px;top:324px;width:24px;height:22px;background:#3a3a3a;"></div>
<div class="r" style="left:1216px;top:324px;width:16px;height:22px;background:#3a3a3a;"></div>
<span class="t m" style="left:424.00px;top:109.00px;line-height:15px;height:15px;color:#cc7832">package</span><span class="t m" style="left:480.00px;top:109.00px;line-height:15px;height:15px;color:#a9b7c6"> com.example.payroll</span><span class="t m" style="left:640.00px;top:109.00px;line-height:15px;height:15px;color:#cc7832">;</span>
<span class="t m" style="left:424.00px;top:153.00px;line-height:15px;height:15px;color:#7c7c7c">import org.</span><span class="t m" style="left:512.00px;top:153.00px;line-height:15px;height:15px;color:#bc3f3c">springframework</span><span class="t m" style="left:632.00px;top:153.00px;line-height:15px;height:15px;color:#7c7c7c">.boot.SpringApplication;</span>
<span class="t m" style="left:424.00px;top:175.00px;line-height:15px;height:15px;color:#7c7c7c">import org.</span><span class="t m" style="left:512.00px;top:175.00px;line-height:15px;height:15px;color:#bc3f3c">springframework</span><span class="t m" style="left:632.00px;top:175.00px;line-height:15px;height:15px;color:#7c7c7c">.boot.autoconfigure.SpringBootApplication;</span>
<span class="t m" style="left:424.00px;top:241.00px;line-height:15px;height:15px;color:#bbb8b0">@</span><span class="t m" style="left:432.00px;top:241.00px;line-height:15px;height:15px;color:#bc3f3c">SpringBootApplication</span>
<span class="t m" style="left:424.00px;top:263.00px;line-height:15px;height:15px;color:#cc7832">public class </span><span class="t m" style="left:528.00px;top:263.00px;line-height:15px;height:15px;color:#a9b7c6">PayrollApplication {</span>
<span class="t m" style="left:456.00px;top:329.00px;line-height:15px;height:15px;color:#cc7832">public static void </span><span class="t m" style="left:608.00px;top:329.00px;line-height:15px;height:15px;color:#ffc66d">main</span><span class="t m" style="left:640.00px;top:329.00px;line-height:15px;height:15px;color:#a9b7c6">(String[] args)</span><span class="t m" style="left:760.00px;top:329.00px;line-height:15px;height:15px;color:#a9b7c6"> </span><span class="t m" style="left:768.00px;top:329.00px;line-height:15px;height:15px;color:#9a9a95">{</span><span class="t m" style="left:776.00px;top:329.00px;line-height:15px;height:15px;color:#a9b7c6"> </span><span class="t m" style="left:784.00px;top:329.00px;line-height:15px;height:15px;color:#bc3f3c">SpringApplication</span><span class="t m" style="left:920.00px;top:329.00px;line-height:15px;height:15px;color:#a9b7c6">.run(PayrollApplication.</span><span class="t m" style="left:1112.00px;top:329.00px;line-height:15px;height:15px;color:#cc7832">class</span><span class="t m" style="left:1152.00px;top:329.00px;line-height:15px;height:15px;color:#cc7832">,</span><span class="t m" style="left:1160.00px;top:329.00px;line-height:15px;height:15px;color:#a9b7c6"> args)</span><span class="t m" style="left:1208.00px;top:329.00px;line-height:15px;height:15px;color:#cc7832">;</span><span class="t m" style="left:1216.00px;top:329.00px;line-height:15px;height:15px;color:#a9b7c6"> </span><span class="t m" style="left:1224.00px;top:329.00px;line-height:15px;height:15px;color:#9a9a95">}</span>
<span class="t m" style="left:424.00px;top:373.00px;line-height:15px;height:15px;color:#a9b7c6">}</span>
<span class="t" style="left:423.79px;top:218.50px;font-size:12px;line-height:14px;height:14px;color:#7e7e7e;letter-spacing:-0.109px;">1 usage</span>
<span class="t" style="left:455.50px;top:306.50px;font-size:12px;line-height:14px;height:14px;color:#7e7e7e;letter-spacing:-0.043px;">no usages</span>
<div class="r" style="left:527px;top:260px;width:2px;height:18px;background:#bbbbbb;"></div>
<svg class="i" style="left:432.5px;top:242.5px;overflow:visible;" width="11" height="15" viewBox="0 0 11 15"><path d="M5.3 0.1 A4.95 4.95 0 0 1 8 9.2 V10.6 H2.6 V9.2 A4.95 4.95 0 0 1 5.3 0.1 Z" fill="#f2a93b"/><rect x="2.3" y="11.5" width="6.4" height="1.1" fill="#dedede"/><rect x="3" y="13.5" width="5" height="1.2" fill="#dedede"/></svg>
<span class="t m" style="left:371.50px;top:109.00px;line-height:15px;height:15px;color:#606366">1</span>
<span class="t m" style="left:371.50px;top:131.00px;line-height:15px;height:15px;color:#606366">2</span>
<span class="t m" style="left:371.50px;top:153.00px;line-height:15px;height:15px;color:#606366">3</span>
<span class="t m" style="left:371.50px;top:175.00px;line-height:15px;height:15px;color:#606366">4</span>
<span class="t m" style="left:371.50px;top:197.00px;line-height:15px;height:15px;color:#606366">5</span>
<span class="t m" style="left:371.50px;top:241.00px;line-height:15px;height:15px;color:#606366">6</span>
<span class="t m" style="left:371.50px;top:263.00px;line-height:15px;height:15px;color:#a4a3a3">7</span>
<span class="t m" style="left:371.50px;top:285.00px;line-height:15px;height:15px;color:#606366">8</span>
<span class="t m" style="left:371.50px;top:329.00px;line-height:15px;height:15px;color:#606366">9</span>
<span class="t m" style="left:363.50px;top:351.00px;line-height:15px;height:15px;color:#606366">12</span>
<span class="t m" style="left:363.50px;top:373.00px;line-height:15px;height:15px;color:#606366">13</span>
<span class="t m" style="left:363.50px;top:395.00px;line-height:15px;height:15px;color:#606366">14</span>
<svg class="i" style="left:390px;top:263px;" width="8.5" height="11.5" viewBox="0 0 8.5 11.5"><path d="M0 0 L8.5 5.75 L0 11.5 Z" fill="#499c54"/></svg>
<svg class="i" style="left:390px;top:329px;" width="8.5" height="11.5" viewBox="0 0 8.5 11.5"><path d="M0 0 L8.5 5.75 L0 11.5 Z" fill="#499c54"/></svg>
<svg class="i" style="left:413px;top:154px;" width="11" height="14" viewBox="0 0 11 14"><path d="M1.5 1.5 H9.5 V8.5 L5.5 12.5 L1.5 8.5 Z" fill="#2b2b2b" stroke="#6a6a6a" stroke-width="1"/><path d="M3.5 5.5 H7.5" stroke="#6a6a6a" stroke-width="1"/></svg>
<svg class="i" style="left:413px;top:173px;" width="11" height="14" viewBox="0 0 11 14"><path d="M1.5 12.5 H9.5 V5.5 L5.5 1.5 L1.5 5.5 Z" fill="#2b2b2b" stroke="#6a6a6a" stroke-width="1"/><path d="M3.5 8.5 H7.5" stroke="#6a6a6a" stroke-width="1"/></svg>
<svg class="i" style="left:413px;top:330px;" width="11" height="11" viewBox="0 0 11 11"><rect x="1.5" y="1.5" width="8" height="8" fill="#2b2b2b" stroke="#6a6a6a" stroke-width="1"/><path d="M3.5 5.5 H7.5 M5.5 3.5 V7.5" stroke="#6a6a6a" stroke-width="1"/></svg>
<svg class="i" style="left:1238px;top:112px;" width="10" height="10" viewBox="0 0 12 12"><circle cx="6" cy="6" r="6" fill="#b3292b"/><rect x="5.1" y="2.6" width="1.8" height="4.6" fill="#3c3f41"/><rect x="5.1" y="8" width="1.8" height="1.8" fill="#3c3f41"/></svg>
<span class="t" style="left:1251.94px;top:111.00px;font-size:11.5px;line-height:12px;height:12px;color:#b0b0b0;">4</span>
<svg class="i" style="left:1266px;top:111px;" width="12.2" height="11" viewBox="0 0 12 11"><path d="M6 0 L12 11 H0 Z" fill="#dba51f"/><rect x="5.2" y="3.8" width="1.6" height="3.8" fill="#20222c"/><rect x="5.2" y="8.4" width="1.6" height="1.5" fill="#20222c"/></svg>
<span class="t" style="left:1281.22px;top:111.00px;font-size:11.5px;line-height:12px;height:12px;color:#b0b0b0;">2</span>
<svg class="i" style="left:1298px;top:114px;" width="9" height="6" viewBox="0 0 9 6"><path d="M0.7 5.3 L4.5 1.2 L8.3 5.3" stroke="#c0c2c4" stroke-width="1.4" fill="none"/></svg>
<svg class="i" style="left:1319px;top:114px;" width="9" height="6" viewBox="0 0 9 6"><path d="M0.7 0.7 L4.5 4.8 L8.3 0.7" stroke="#c0c2c4" stroke-width="1.4" fill="none"/></svg>
<div class="r" style="left:1326px;top:131px;width:8px;height:311px;background:#4b4b4b;"></div>
<div class="r" style="left:1321px;top:166px;width:14px;height:2px;background:#9b2b2b;"></div>
<div class="r" style="left:1321px;top:185px;width:14px;height:2px;background:#9b2b2b;"></div>
<div class="r" style="left:1321px;top:240px;width:14px;height:2px;background:#9b2b2b;"></div>
<div class="r" style="left:1321px;top:258px;width:14px;height:2px;background:#2a7a2a;"></div>
<div class="r" style="left:1321px;top:314px;width:14px;height:2px;background:#2a7a2a;"></div>
<svg class="i" style="left:1340px;top:88px;overflow:visible;" width="12" height="13" viewBox="0 0 12 13"><path d="M6 1 C8.8 1 9.6 3.4 9.8 5.6 C10 8 10.6 8.6 11.6 9.6 H0.4 C1.4 8.6 2 8 2.2 5.6 C2.4 3.4 3.2 1 6 1 Z" fill="#c4c4c4"/><rect x="4.4" y="10.6" width="3.2" height="1.6" fill="#c4c4c4"/><circle cx="10" cy="2.6" r="2.6" fill="#3592c4"/></svg>
<span class="t" style="left:0;top:0;font-size:12px;line-height:14px;height:14px;color:#bbbbbb;letter-spacing:0.138px;transform-origin:0 0;transform:translate(1352.30px,104.72px) rotate(90deg);">Notifications</span>
<svg class="i" style="left:1339.7px;top:194px;overflow:visible;" width="11.4" height="12.4" viewBox="0 0 11.4 12.4"><g fill="#c4c4c4"><ellipse cx="5.7" cy="1.8" rx="5.7" ry="1.8"/><path d="M0 1.95 A5.7 1.8 0 0 0 11.4 1.95 V4.30 A5.7 1.8 0 0 1 0 4.30 Z"/><path d="M0 5.00 A5.7 1.8 0 0 0 11.4 5.00 V7.35 A5.7 1.8 0 0 1 0 7.35 Z"/><path d="M0 8.05 A5.7 1.8 0 0 0 11.4 8.05 V10.40 A5.7 1.8 0 0 1 0 10.40 Z"/></g></svg>
<span class="t" style="left:0;top:0;font-size:12px;line-height:14px;height:14px;color:#bbbbbb;letter-spacing:-0.307px;transform-origin:0 0;transform:translate(1352.30px,211.12px) rotate(90deg);">Database</span>
<svg class="i" style="left:1338.9px;top:282.4px;overflow:visible" width="13.3" height="9.6"><g transform="translate(0.135,-0.949) scale(0.9017,1.0549)"><g transform="skewX(-14)" fill="none" stroke="#c4c4c4" stroke-width="2.3" stroke-linecap="butt"><path d="M3.6 10 V1.1"/><path d="M3.6 4.8 C3.6 1.2 8.6 1.0 8.6 4.4 V10"/><path d="M8.6 4.8 C8.6 1.2 13.6 1.0 13.6 4.4 V10"/></g></g></svg>
<span class="t" style="left:0;top:0;font-size:12px;line-height:14px;height:14px;color:#bbbbbb;letter-spacing:-0.213px;transform-origin:0 0;transform:translate(1352.30px,298.02px) rotate(90deg);">Maven</span>
<span class="t" style="left:26.43px;top:487.00px;font-size:13px;line-height:15px;height:15px;color:#bbbbbb;letter-spacing:0.417px;">Problems:</span>
<span class="t" style="left:107.23px;top:487.00px;font-size:13px;line-height:15px;height:15px;color:#bbbbbb;letter-spacing:0.399px;">File</span>
<span class="t" style="left:137.34px;top:487.00px;font-size:13px;line-height:15px;height:15px;color:#858585;">6</span>
<span class="t" style="left:171.33px;top:487.00px;font-size:13px;line-height:15px;height:15px;color:#bbbbbb;letter-spacing:0.175px;">Project Errors</span>
<span class="t" style="left:261.44px;top:487.00px;font-size:13px;line-height:15px;height:15px;color:#858585;">8</span>
<div class="r" style="left:21px;top:507px;width:1315px;height:1px;background:#323232;"></div>
<div class="r" style="left:51px;top:508px;width:1px;height:216px;background:#323232;"></div>
<div class="r" style="left:94px;top:505px;width:64px;height:3px;background:#7a8085;border-radius:1.5px;"></div>
<svg class="i" style="left:1290px;top:487.3px;" width="13" height="13.599999999999998" viewBox="0 0 13 13.6"><g transform="translate(6.5,6.8)" fill="#c4c4c4"><circle r="4.6"/><path d="M-1.9 -4.1 L-1.25 -6.8 H1.25 L1.9 -4.1 Z" transform="rotate(0)"/><path d="M-1.9 -4.1 L-1.25 -6.8 H1.25 L1.9 -4.1 Z" transform="rotate(60)"/><path d="M-1.9 -4.1 L-1.25 -6.8 H1.25 L1.9 -4.1 Z" transform="rotate(120)"/><path d="M-1.9 -4.1 L-1.25 -6.8 H1.25 L1.9 -4.1 Z" transform="rotate(180)"/><path d="M-1.9 -4.1 L-1.25 -6.8 H1.25 L1.9 -4.1 Z" transform="rotate(240)"/><path d="M-1.9 -4.1 L-1.25 -6.8 H1.25 L1.9 -4.1 Z" transform="rotate(300)"/></g><circle cx="6.5" cy="6.8" r="2.15" fill="#3c3f41"/></svg>
<div class="r" style="left:1316px;top:493px;width:12px;height:2px;background:#c4c4c4;"></div>
<div class="r" style="left:52px;top:528px;width:1283px;height:20px;background:#0d293e;"></div>
<svg class="i" style="left:59px;top:510px;overflow:visible;" width="16" height="16" viewBox="0 -1 16 16"><circle cx="7" cy="7" r="7" fill="#3587ae"/><path d="M9.1 5.3 A2.7 2.7 0 1 0 9.1 8.7" stroke="#2a3a46" stroke-width="1.15" fill="none"/><path d="M9.9 -1 L15.1 2.5 L9.9 5.9 Z" fill="#68b843" stroke="rgba(20,35,50,0.55)" stroke-width="0.7" paint-order="stroke"/></svg>
<span class="t" style="left:76.13px;top:511.00px;font-size:13px;line-height:15px;height:15px;color:#bbbbbb;letter-spacing:0.376px;">PayrollApplication.java</span>
<span class="t" style="left:221.92px;top:511.00px;font-size:13px;line-height:15px;height:15px;color:#858585;letter-spacing:0.432px;">~/area-de-trabalho2/work-spaces/ws-sts/payroll/src/main/java/com/example/payroll</span>
<span class="t" style="left:737.34px;top:511.00px;font-size:13px;line-height:15px;height:15px;color:#858585;letter-spacing:0.514px;">6 problems</span>
<svg class="i" style="left:78.8px;top:532.8px;" width="10.4" height="10.4" viewBox="0 0 12 12"><circle cx="6" cy="6" r="6" fill="#b3292b"/><rect x="5.1" y="2.6" width="1.8" height="4.6" fill="#3c3f41"/><rect x="5.1" y="8" width="1.8" height="1.8" fill="#3c3f41"/></svg>
<span class="t" style="left:94.54px;top:531.00px;font-size:13px;line-height:15px;height:15px;color:#bbbbbb;letter-spacing:0.380px;">Cannot resolve symbol 'springframework'</span>
<span class="t" style="left:347.31px;top:531.00px;font-size:13px;line-height:15px;height:15px;color:#858585;letter-spacing:0.417px;">:3</span>
<svg class="i" style="left:78.8px;top:552.8px;" width="10.4" height="10.4" viewBox="0 0 12 12"><circle cx="6" cy="6" r="6" fill="#b3292b"/><rect x="5.1" y="2.6" width="1.8" height="4.6" fill="#3c3f41"/><rect x="5.1" y="8" width="1.8" height="1.8" fill="#3c3f41"/></svg>
<span class="t" style="left:94.54px;top:551.00px;font-size:13px;line-height:15px;height:15px;color:#bbbbbb;letter-spacing:0.380px;">Cannot resolve symbol 'springframework'</span>
<span class="t" style="left:347.31px;top:551.00px;font-size:13px;line-height:15px;height:15px;color:#858585;letter-spacing:0.226px;">:4</span>
<svg class="i" style="left:78.8px;top:572.8px;" width="10.4" height="10.4" viewBox="0 0 12 12"><circle cx="6" cy="6" r="6" fill="#b3292b"/><rect x="5.1" y="2.6" width="1.8" height="4.6" fill="#3c3f41"/><rect x="5.1" y="8" width="1.8" height="1.8" fill="#3c3f41"/></svg>
<span class="t" style="left:94.54px;top:571.00px;font-size:13px;line-height:15px;height:15px;color:#bbbbbb;letter-spacing:0.386px;">Cannot resolve symbol 'SpringBootApplication'</span>
<span class="t" style="left:382.01px;top:571.00px;font-size:13px;line-height:15px;height:15px;color:#858585;letter-spacing:0.817px;">:6</span>
<svg class="i" style="left:78.8px;top:592.8px;" width="10.4" height="10.4" viewBox="0 0 12 12"><circle cx="6" cy="6" r="6" fill="#b3292b"/><rect x="5.1" y="2.6" width="1.8" height="4.6" fill="#3c3f41"/><rect x="5.1" y="8" width="1.8" height="1.8" fill="#3c3f41"/></svg>
<span class="t" style="left:94.54px;top:591.00px;font-size:13px;line-height:15px;height:15px;color:#bbbbbb;letter-spacing:0.343px;">Cannot resolve symbol 'SpringApplication'</span>
<span class="t" style="left:352.01px;top:591.00px;font-size:13px;line-height:15px;height:15px;color:#858585;letter-spacing:0.612px;">:10</span>
<svg class="i" style="left:77.4px;top:612.6px;" width="12.6" height="10.8" viewBox="0 0 12 11"><path d="M6 0 L12 11 H0 Z" fill="#dba51f"/><rect x="5.2" y="3.8" width="1.6" height="3.8" fill="#20222c"/><rect x="5.2" y="8.4" width="1.6" height="1.5" fill="#20222c"/></svg>
<span class="t" style="left:94.20px;top:611.00px;font-size:13px;line-height:15px;height:15px;color:#bbbbbb;letter-spacing:0.403px;">Unused import statement</span>
<span class="t" style="left:250.61px;top:611.00px;font-size:13px;line-height:15px;height:15px;color:#858585;letter-spacing:-0.283px;">:3</span>
<svg class="i" style="left:77.4px;top:632.6px;" width="12.6" height="10.8" viewBox="0 0 12 11"><path d="M6 0 L12 11 H0 Z" fill="#dba51f"/><rect x="5.2" y="3.8" width="1.6" height="3.8" fill="#20222c"/><rect x="5.2" y="8.4" width="1.6" height="1.5" fill="#20222c"/></svg>
<span class="t" style="left:94.20px;top:631.00px;font-size:13px;line-height:15px;height:15px;color:#bbbbbb;letter-spacing:0.403px;">Unused import statement</span>
<span class="t" style="left:250.61px;top:631.00px;font-size:13px;line-height:15px;height:15px;color:#858585;letter-spacing:-0.474px;">:4</span>
<svg class="i" style="left:28px;top:517px;" width="16" height="16" viewBox="0 0 16 16"><g fill="none" stroke="#c4c4c4" stroke-width="1.3"><path d="M12.8 3.9 A6.4 6.4 0 1 1 7.9 1.6"/><path d="M10.4 5.9 A3.3 3.3 0 1 1 7.9 4.7"/><path d="M7.9 1 V7.4"/></g><circle cx="7.9" cy="8" r="1.2" fill="#c4c4c4"/></svg>
<svg class="i" style="left:30px;top:548px;" width="15" height="15" viewBox="0 0 15 15"><g fill="#c4c4c4"><rect x="0" y="0" width="4" height="4"/><rect x="6" y="0" width="4" height="4"/><rect x="0" y="6" width="4" height="4"/><rect x="6" y="6" width="4" height="4"/><path d="M8.2 11 H14 L11.1 14 Z"/></g></svg>
<svg class="i" style="left:30px;top:572px;overflow:visible;" width="11" height="15" viewBox="0 0 11 15"><path d="M5.1 0 A5.1 5.1 0 0 1 7.6 9.5 V10.2 H2.6 V9.5 A5.1 5.1 0 0 1 5.1 0 Z" fill="#f0a732"/><rect x="2" y="11.2" width="6.2" height="1" fill="#c9c9c9"/><rect x="3.4" y="13.2" width="3.4" height="1" fill="#c9c9c9"/></svg>
<svg class="i" style="left:29px;top:599px;" width="12" height="12" viewBox="0 0 12 12"><rect x="0" y="0" width="12" height="12" fill="#c4c4c4"/><rect x="2.4" y="2.2" width="3.4" height="7.6" fill="#3c3f41"/></svg>
<div class="r" style="left:0px;top:723px;width:1356px;height:1px;background:#323232;"></div>
<div class="r" style="left:209px;top:724px;width:87px;height:21px;background:#2d2f30;"></div>
<span class="t" style="left:49.65px;top:727.00px;font-size:12px;line-height:14px;height:14px;color:#bbbbbb;letter-spacing:-0.096px;">Version Control</span>
<span class="t" style="left:167.83px;top:727.00px;font-size:12px;line-height:14px;height:14px;color:#bbbbbb;letter-spacing:-0.840px;">TODO</span>
<span class="t" style="left:236.32px;top:727.00px;font-size:12px;line-height:14px;height:14px;color:#f2f2f2;letter-spacing:-0.081px;">Problems</span>
<span class="t" style="left:324.13px;top:727.00px;font-size:12px;line-height:14px;height:14px;color:#bbbbbb;letter-spacing:-0.286px;">Terminal</span>
<span class="t" style="left:405.02px;top:727.00px;font-size:12px;line-height:14px;height:14px;color:#bbbbbb;letter-spacing:0.225px;">Profiler</span>
<span class="t" style="left:479.76px;top:727.00px;font-size:12px;line-height:14px;height:14px;color:#bbbbbb;letter-spacing:-0.648px;">Services</span>
<span class="t" style="left:557.22px;top:727.00px;font-size:12px;line-height:14px;height:14px;color:#bbbbbb;letter-spacing:0.044px;">Build</span>
<span class="t" style="left:621.22px;top:727.00px;font-size:12px;line-height:14px;height:14px;color:#bbbbbb;letter-spacing:-0.410px;">Dependencies</span>
<svg class="i" style="left:35px;top:729px;overflow:visible;" width="9" height="12" viewBox="0 0 9 12"><circle cx="2.2" cy="1.8" r="1.7" fill="#c4c4c4"/><circle cx="2.2" cy="9.6" r="1.7" fill="#c4c4c4"/><circle cx="7" cy="3.2" r="1.7" fill="#c4c4c4"/><path d="M2.2 2 V9.4 M2.2 7.6 C2.2 5.6 7 6.4 7 3.4" stroke="#c4c4c4" stroke-width="1.2" fill="none"/></svg>
<svg class="i" style="left:153px;top:729.4px;" width="11" height="10" viewBox="0 0 11 10"><g fill="#c4c4c4"><rect x="0" y="0.3" width="2" height="1.9"/><rect x="3.4" y="0.3" width="7.4" height="1.9"/><rect x="0" y="3.7" width="2" height="1.9"/><rect x="3.4" y="3.7" width="7.4" height="1.9"/><rect x="0" y="7.1" width="2" height="1.9"/><rect x="3.4" y="7.1" width="7.4" height="1.9"/></g></svg>
<svg class="i" style="left:221.3px;top:728.4px;" width="10.6" height="10.6" viewBox="0 0 12 12"><circle cx="6" cy="6" r="6" fill="#d15656"/><rect x="5.1" y="2.6" width="1.8" height="4.6" fill="#2d2f30"/><rect x="5.1" y="8" width="1.8" height="1.8" fill="#2d2f30"/></svg>
<svg class="i" style="left:308px;top:729px;" width="11" height="10" viewBox="0 0 11 10"><rect x="0" y="0" width="11" height="10" fill="#c4c4c4"/><path d="M2 2.2 L4.8 4.6 L2 7" stroke="#3c3f41" stroke-width="1.2" fill="none"/><rect x="5.4" y="6.8" width="3.6" height="1.1" fill="#3c3f41"/></svg>
<svg class="i" style="left:388.5px;top:728.5px;overflow:visible;" width="13" height="13" viewBox="0 0 13 13"><circle cx="5.6" cy="5.6" r="4.8" fill="none" stroke="#c4c4c4" stroke-width="1.3"/><path d="M5.9 2.8 L4.6 6.6" fill="none" stroke="#c4c4c4" stroke-width="1.1"/><path d="M6.2 4.8 L13.4 8.8 L6.2 12.8 Z" fill="#3c3f41"/><path d="M7.2 6.4 L11.8 8.8 L7.2 11.3 Z" fill="#c4c4c4"/></svg>
<svg class="i" style="left:463px;top:728.5px;" width="13" height="12" viewBox="0 0 13 12"><path d="M0.1 6 L3.7 0.2 H9.5 L12.5 6 L9.5 11.4 H3.7 Z" fill="#c4c4c4"/><path d="M4.6 3.2 L9 6 L4.6 8.8 Z" fill="#3c3f41"/></svg>
<svg class="i" style="left:540.7px;top:728.6px;" width="13" height="13" viewBox="0 0 13 13"><g fill="#c4c4c4" transform="scale(0.8)"><path d="M0 6.5 L6.3 0.9 L9.2 1.1 L8.6 2.5 L2.5 8.4 Z"/><path d="M4.7 5.8 L6.8 4.1 L15.4 12.4 L12.7 15.1 Z"/></g></svg>
<svg class="i" style="left:605px;top:728.5px;" width="12" height="12" viewBox="0 0 12 12"><g fill="none" stroke="#c4c4c4" stroke-width="1.3"><path d="M6 0.8 L11.2 3.4 L6 6 L0.8 3.4 Z" fill="#c4c4c4"/><path d="M0.8 6 L6 8.6 L11.2 6"/><path d="M0.8 8.6 L6 11.2 L11.2 8.6"/></g></svg>
<div class="r" style="left:0px;top:744px;width:1356px;height:1px;background:#494644;"></div>
<svg class="i" style="left:6px;top:749px;" width="13" height="13" viewBox="0 0 13 13"><rect x="3" y="0.5" width="9" height="9" fill="none" stroke="#c4c4c4" stroke-width="1"/><path d="M0.5 3 V11.5 H9" fill="none" stroke="#c4c4c4" stroke-width="1"/></svg>
<span class="t" style="left:26.63px;top:748.00px;font-size:13px;line-height:15px;height:15px;color:#bbbbbb;letter-spacing:0.321px;">Maven build scripts found // Load Maven Project</span>
<span class="t" style="left:327.91px;top:748.00px;font-size:13px;line-height:15px;height:15px;color:#bbbbbb;letter-spacing:0.141px;">Skip (5 minutes ago)</span>
<span class="t" style="left:1178.13px;top:748.00px;font-size:13px;line-height:15px;height:15px;color:#bbbbbb;letter-spacing:0.515px;">7:14</span>
<span class="t" style="left:1216.73px;top:748.00px;font-size:13px;line-height:15px;height:15px;color:#bbbbbb;letter-spacing:-0.884px;">LF</span>
<span class="t" style="left:1242.60px;top:748.00px;font-size:13px;line-height:15px;height:15px;color:#bbbbbb;letter-spacing:-0.140px;">UTF-8</span>
<span class="t" style="left:1291.11px;top:748.00px;font-size:13px;line-height:15px;height:15px;color:#bbbbbb;letter-spacing:0.612px;">Tab*</span>
<svg class="i" style="left:1330px;top:748px;" width="13" height="13" viewBox="0 0 13 13"><rect x="4" y="6" width="8" height="6" fill="#c4c4c4"/><path d="M1.4 5.8 V3.9 A2.5 2.5 0 0 1 6.4 3.9 V6.2" fill="none" stroke="#c4c4c4" stroke-width="1.3"/></svg>
<div class="r" style="left:0px;top:767px;width:1366px;height:1px;background:#141b1f;"></div>
</body></html>
